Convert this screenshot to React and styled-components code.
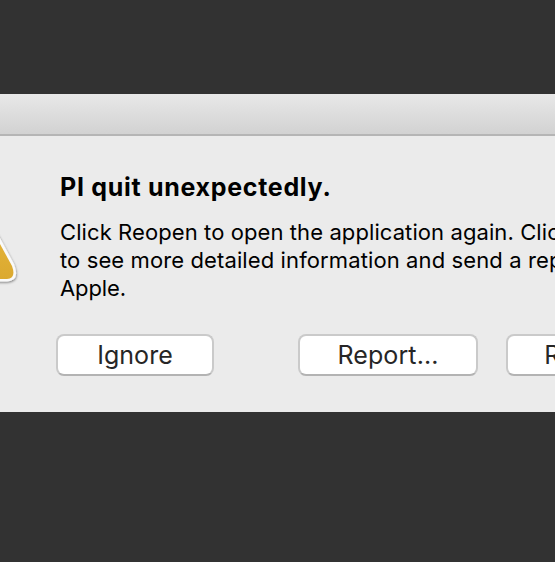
import React from "react";
import styled, { createGlobalStyle } from "styled-components";

const GlobalStyle = createGlobalStyle`
  * { box-sizing: border-box; }
  body { margin: 0; background: #323232; overflow: hidden; }
`;

const Desktop = styled.main`
  height: 562px;
  padding-top: 94px;
  overflow: hidden;
  background: #323232;
  font-family: Inter, "Liberation Sans", sans-serif;
  color: #000;
`;

const Dialog = styled.section`
  width: 100%;
  height: 318px;
  background: #ebebeb;
  overflow: hidden;
`;

const TitleBar = styled.header`
  height: 42px;
  background: linear-gradient(#e8e8e8, #d2d2d2);
  border-bottom: 2px solid #b5b5b5;
`;

const Content = styled.div`
  display: grid;
  grid-template-columns: 56px 700px;
`;

const IconSlot = styled.div`
  padding-top: 66px;
`;

const WarningIcon = styled.svg`
  display: block;
  width: 30px;
  height: 92px;
`;

const Heading = styled.h1`
  margin: 35px 0 0 4px;
  font-size: 25px;
  line-height: 32px;
  font-weight: 700;
  letter-spacing: 0.7px;
  white-space: nowrap;
`;

const Message = styled.p`
  margin: 15px 0 0 4px;
  font-size: 22px;
  line-height: 28px;
`;

const Line = styled.span`
  display: block;
  white-space: nowrap;
  letter-spacing: ${(p) => p.$spacing}px;
`;

const Actions = styled.div`
  display: flex;
  margin-top: 32px;
`;

const Button = styled.button`
  width: ${(p) => p.$width}px;
  height: 42px;
  margin: 0 ${(p) => p.$gap || 0}px 0 0;
  padding: 0;
  flex: none;
  border: 2px solid #cacaca;
  border-bottom-color: #b3b3b3;
  border-radius: 8px;
  background: #fff;
  color: #262626;
  font-family: inherit;
  font-size: 25px;
  line-height: 36px;
  font-weight: 400;
  letter-spacing: ${(p) => p.$spacing}px;
`;

export default function App() {
  return (
    <Desktop>
      <GlobalStyle />
      <Dialog role="alertdialog">
        <TitleBar />
        <Content>
          <IconSlot>
            <WarningIcon viewBox="0 202 30 92" aria-hidden="true">
              <defs>
                <linearGradient id="amber" x1="0" y1="0" x2="0" y2="1">
                  <stop offset="0" stopColor="#e6b63c" />
                  <stop offset="1" stopColor="#dba92f" />
                </linearGradient>
                <filter id="shade" x="-30%" y="-30%" width="160%" height="160%">
                  <feDropShadow dx="0.5" dy="1.2" stdDeviation="1.1" floodOpacity="0.45" />
                </filter>
              </defs>
              <path
                d="M-12 217L-3 233L0 238L14 264Q20.5 281 7 281.5H-12Z"
                fill="#fafafa"
                filter="url(#shade)"
              />
              <path d="M-12 222L0 244L12 266Q16.5 278.5 7 279H-12Z" fill="url(#amber)" />
            </WarningIcon>
          </IconSlot>
          <div>
            <Heading>PI quit unexpectedly.</Heading>
            <Message>
              <Line $spacing={0.09}>Click Reopen to open the application again. Click Report</Line>
              <Line $spacing={0.11}>to see more detailed information and send a report to</Line>
              <Line $spacing={-0.1}>Apple.</Line>
            </Message>
            <Actions>
              <Button $width={158} $gap={84} $spacing={0.05}>Ignore</Button>
              <Button $width={180} $gap={28} $spacing={0.1}>Report...</Button>
              <Button $width={167} $spacing={0.1}>Reopen</Button>
            </Actions>
          </div>
        </Content>
      </Dialog>
    </Desktop>
  );
}
